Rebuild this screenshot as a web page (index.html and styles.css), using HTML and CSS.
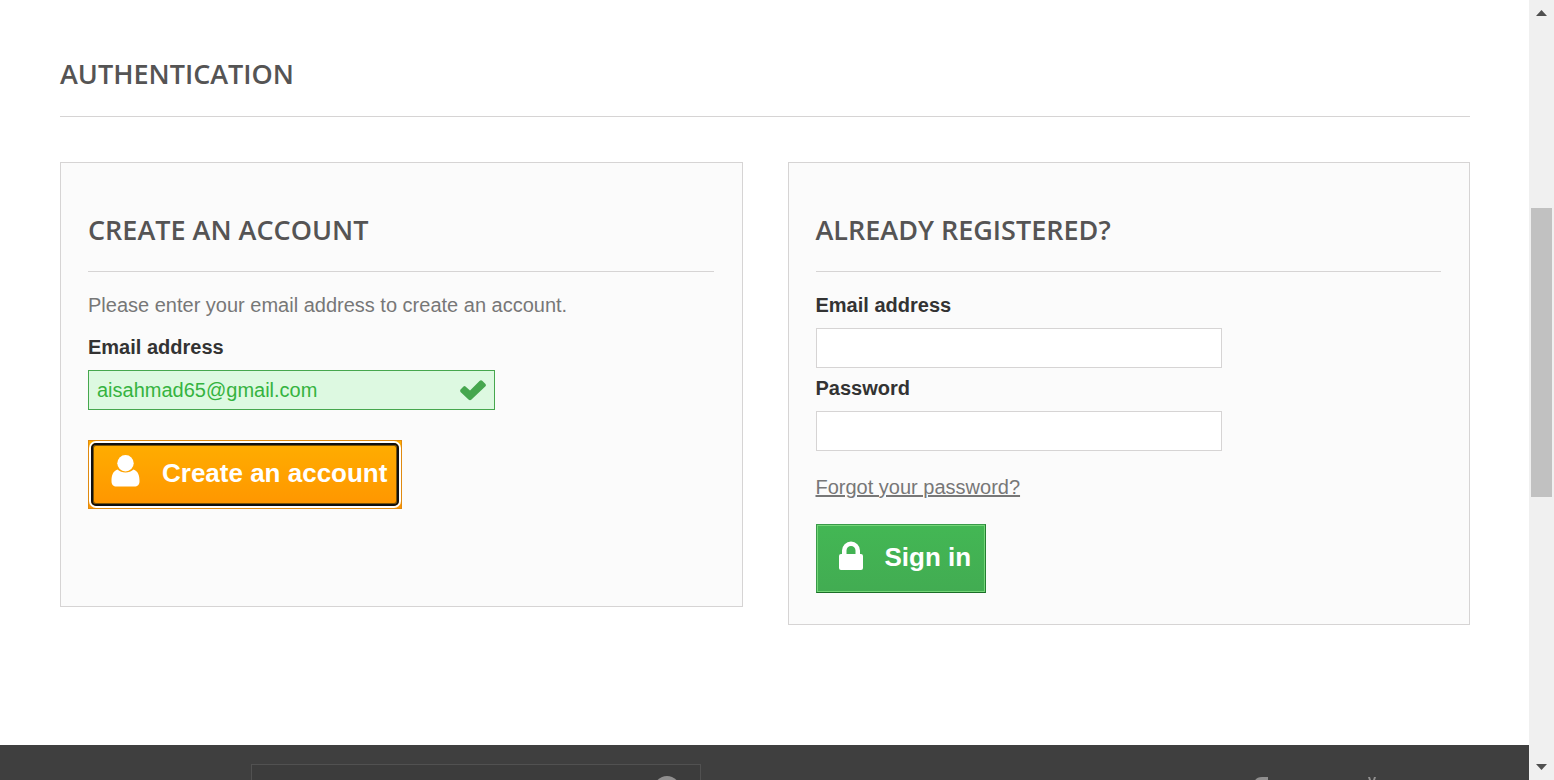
FILE: index.html
```html
<!DOCTYPE html>
<html lang="en">
<head>
<meta charset="utf-8">
<title>Authentication</title>
<link rel="stylesheet" href="styles.css">
</head>
<body>
<div class="page">
  <main class="content">
    <h1 class="heading">AUTHENTICATION</h1>
    <div class="columns">
      <form class="card">
        <h2 class="heading">CREATE AN ACCOUNT</h2>
        <p class="intro">Please enter your email address to create an account.</p>
        <label class="label" for="new-email">Email address</label>
        <div class="field field-valid">
          <input class="input input-valid" id="new-email" type="text" value="aisahmad65@gmail.com">
          <svg class="check" viewBox="0 0 28 22" aria-hidden="true"><path d="M1.500 10.500 4.500 7.500q1-.8 2 0L11 11.500 20.500 2q1.500-1.500 3 0l3 3q1 1.200 0 2.300L12.500 20.500q-1.500 1.500-3 0l-8-7.500q-.8-1.200 0-2.500z"/></svg>
        </div>
        <button class="button button-create" type="button">
          <svg class="icon-user" viewBox="0 0 29 32" aria-hidden="true"><path d="M6.500 14.500C2 16 .5 20.500.5 26c0 4 2 5.500 5 5.500h18c3 0 5-1.500 5-5.500 0-5.500-1.500-10-6-11.500-2 2-5 3-8 3s-6-1-8-3z"/><circle cx="14.500" cy="8.300" r="8.200"/></svg>
          <span>Create an account</span>
        </button>
      </form>
      <form class="card">
        <h2 class="heading">ALREADY REGISTERED?</h2>
        <label class="label" for="email">Email address</label>
        <div class="field"><input class="input" id="email" type="text"></div>
        <label class="label label-next" for="password">Password</label>
        <div class="field"><input class="input" id="password" type="password"></div>
        <p class="forgot"><a class="link" href="#">Forgot your password?</a></p>
        <button class="button button-signin" type="button">
          <svg class="icon-lock" viewBox="0 0 24 29" aria-hidden="true"><path fill-rule="evenodd" d="M3 13V9.500a9 9 0 0 1 18 0V13h1q2 0 2 2v12q0 2-2 2H2q-2 0-2-2V15q0-2 2-2zM7.500 13h9V9.500a4.500 4.500 0 0 0-9 0z"/></svg>
          <span>Sign in</span>
        </button>
      </form>
    </div>
  </main>
  <footer class="footer">
    <div class="newsletter">
      <input class="newsletter-input" type="text" aria-label="Newsletter">
      <button class="newsletter-button" type="button" aria-label="Subscribe"></button>
    </div>
    <div class="social">
      <a href="#" aria-label="Facebook"><svg class="social-icon" viewBox="0 0 20 36"><path d="M19 0v6h-4q-3 0-3 3v4h7l-1 7h-6v16H5V20H0v-7h5V8q0-8 8-8z"/></svg></a>
      <a href="#" aria-label="YouTube"><svg class="social-icon social-youtube" viewBox="0 0 30 36"><path d="M3 0h2l2 6 2-6h2L8 9v6H6V9z"/><rect y="17" width="30" height="19" rx="4"/></svg></a>
    </div>
  </footer>
</div>
<div class="scrollbar" aria-hidden="true">
  <svg class="arrow" viewBox="0 0 11 6"><path d="M0 6 5.500 0 11 6z"/></svg>
  <div class="track"><div class="thumb"></div></div>
  <svg class="arrow" viewBox="0 0 11 6"><path d="M0 0 5.500 6 11 0z"/></svg>
</div>
</body>
</html>
```
FILE: styles.css
```css
* { box-sizing: border-box; }

body {
  margin: 0;
  height: 100vh;
  display: flex;
  overflow: hidden;
  background: #fff;
  color: #777;
  font: 20px/30px "Liberation Sans", Arial, sans-serif;
}

.page { flex: 1; min-width: 0; height: 100vh; overflow: hidden; }

.content { padding: 60px 59px 120px 60px; }

.heading {
  margin: 0;
  padding-bottom: 28px;
  border-bottom: 1px solid #d6d4d4;
  color: #555454;
  font: 600 27px/28px "Open Sans", sans-serif;
}

.columns {
  display: grid;
  grid-template-columns: 1fr 1fr;
  gap: 45px;
  align-items: start;
  margin-top: 45px;
}

.card {
  min-height: 445px;
  padding: 53px 28px 31px 27px;
  border: 1px solid #d6d4d4;
  background: #fbfbfb;
}

.card .heading { margin-bottom: 18px; padding-bottom: 27px; }

.intro { margin: 0 0 12px; }

.label {
  display: block;
  margin-bottom: 8px;
  color: #333;
  font-weight: bold;
}

.label-next { margin-top: 5px; }

.field { position: relative; width: 65%; }

.input {
  display: block;
  width: 100%;
  height: 40px;
  padding: 0 8px;
  border: 1px solid #d6d4d4;
  border-radius: 0;
  background: #fff;
  color: #777;
  font: inherit;
}

.input-valid {
  border-color: #46a74e;
  background: #ddf9e1;
  color: #35b33f;
}

.check {
  position: absolute;
  top: 9px;
  right: 8px;
  width: 28px;
  height: 22px;
  fill: #46a74e;
}

.forgot { margin: 21px 0 22px; }

.link { color: #777; text-decoration: underline; }

.button {
  display: flex;
  align-items: center;
  gap: 22px;
  height: 69px;
  padding: 0 14px 4px 22px;
  border: 1px solid;
  color: #fff;
  font: bold 26px/32px "Liberation Sans", Arial, sans-serif;
}

.button svg { margin-bottom: 3px; fill: #fff; }

.button-create {
  position: relative;
  margin-top: 30px;
  border-color: #e08a10;
  background: linear-gradient(#ffae00, #ff9500);
}

.button-create::after {
  content: "";
  position: absolute;
  inset: 2px;
  border: 2px solid #101010;
  border-radius: 5px;
  box-shadow: 0 0 0 2px #fff, inset 0 0 0 1px #7a5205;
}

.button-signin {
  border-color: #399a49 #247f32 #1a6d27 #399a49;
  background: linear-gradient(#43b754, #42ac52);
  box-shadow: inset 0 0 0 1px #74d578;
}

.icon-user { width: 29px; height: 32px; }

.icon-lock { width: 24px; height: 29px; }

.footer {
  display: flex;
  justify-content: space-between;
  padding: 19px 134px 40px 251px;
  background: #3f3f3f;
}

.newsletter {
  display: flex;
  align-items: flex-start;
  width: 450px;
  height: 66px;
  padding: 11px 20px 0 8px;
  border: 1px solid #515151;
  background: #3c3c3c;
}

.newsletter-input {
  flex: 1;
  height: 40px;
  border: 0;
  background: transparent;
  color: #fff;
  font: inherit;
}

.newsletter-button {
  width: 26px;
  height: 26px;
  padding: 0;
  border: 0;
  border-radius: 50%;
  background: #908f8f;
}

.social { display: flex; gap: 96px; padding-top: 13px; }

.social-icon { display: block; height: 36px; fill: #908f8f; }

.scrollbar {
  display: flex;
  flex-direction: column;
  align-items: center;
  width: 25px;
  height: 100vh;
  padding: 10px 0;
  background: #f0f0f0;
}

.arrow { width: 11px; height: 6px; fill: #505050; }

.track { flex: 1; width: 21px; padding-top: 192px; }

.thumb { height: 289px; background: #c1c1c1; }
```
